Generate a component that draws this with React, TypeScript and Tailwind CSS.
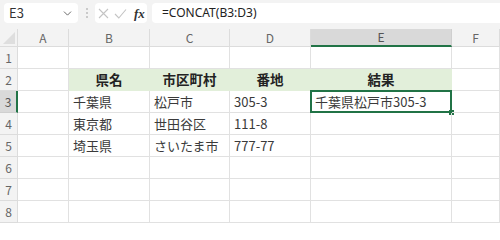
import { ChevronDown } from "lucide-react";

const cols = [
  { key: "A", w: "w-[51px]" },
  { key: "B", w: "w-[81px]" },
  { key: "C", w: "w-[80px]" },
  { key: "D", w: "w-[81px]" },
  { key: "E", w: "w-[141px]" },
  { key: "F", w: "w-[48px]" },
];

const data: Record<number, string[]> = {
  2: ["", "県名", "市区町村", "番地", "結果", ""],
  3: ["", "千葉県", "松戸市", "305-3", "千葉県松戸市305-3", ""],
  4: ["", "東京都", "世田谷区", "111-8", "", ""],
  5: ["", "埼玉県", "さいたま市", "777-77", "", ""],
};

const rows = [1, 2, 3, 4, 5, 6, 7, 8];

function Toolbar() {
  return (
    <div className="h-[29px] bg-[#f3f3f3] flex items-start pt-[3px] pl-[4px]">
      <div className="w-[74px] h-[20px] bg-white rounded-[4px] flex items-center justify-between pl-[5px] pr-[4px]">
        <span className="text-[13px] text-[#333]">E3</span>
        <ChevronDown className="w-[13px] h-[13px] text-[#555]" strokeWidth={1.6} />
      </div>
      <div className="w-[17px] h-[20px] flex flex-col items-center justify-center gap-[2px]">
        <span className="w-[2px] h-[2px] rounded-full bg-[#bdbdbd]" />
        <span className="w-[2px] h-[2px] rounded-full bg-[#bdbdbd]" />
        <span className="w-[2px] h-[2px] rounded-full bg-[#bdbdbd]" />
      </div>
      <div className="w-[52px] h-[20px] bg-white rounded-[4px] flex items-center pl-[3px] gap-[5px]">
        <svg width="11" height="11" viewBox="0 0 11 11">
          <path d="M1 1 L10 10 M10 1 L1 10" stroke="#c4c4c4" strokeWidth="1.1" fill="none" />
        </svg>
        <svg width="13" height="11" viewBox="0 0 13 11">
          <path d="M1 6 L4.8 10 L12 1.5" stroke="#c4c4c4" strokeWidth="1.1" fill="none" />
        </svg>
        <span className="text-[13px] italic font-bold text-[#333] font-['Liberation_Serif',serif] leading-none ml-[2px]">
          fx
        </span>
      </div>
      <div className="ml-[5px] flex-1 h-[20px] bg-white rounded-l-[4px] flex items-center pl-[10px]">
        <span className="text-[12px] text-[#222] font-['Noto_Sans',sans-serif]">=CONCAT(B3:D3)</span>
      </div>
    </div>
  );
}

function HeaderRow() {
  return (
    <div className="flex h-[18px] bg-[#f3f3f3]">
      <div className="w-[18px] h-full relative border-r border-b border-[#dcdcdc]">
        <svg width="12" height="12" viewBox="0 0 12 12" className="absolute right-[2px] bottom-[2px]">
          <polygon points="12,0 12,12 0,12" fill="#dedede" />
        </svg>
      </div>
      {cols.map((c) => {
        const sel = c.key === "E";
        return (
          <div
            key={c.key}
            className={
              sel
                ? `${c.w} h-full flex items-center justify-center bg-[#d9d9d9] border-r border-[#cfcfcf] border-b-2 border-b-[#217346] text-[12px] text-[#555]`
                : `${c.w} h-full flex items-center justify-center border-r border-b border-[#dcdcdc] text-[12px] text-[#666]`
            }
          >
            {c.key}
          </div>
        );
      })}
    </div>
  );
}

function SheetRow({ n }: { n: number }) {
  const vals = data[n] ?? ["", "", "", "", "", ""];
  const selRow = n === 3;
  return (
    <div className="flex h-[22px]">
      <div
        className={
          selRow
            ? "w-[18px] h-full flex items-center justify-center bg-[#d9d9d9] border-b border-[#cfcfcf] border-r-2 border-r-[#217346] text-[12px] text-[#555]"
            : "w-[18px] h-full flex items-center justify-center bg-[#f3f3f3] border-r border-b border-[#dcdcdc] text-[12px] text-[#666]"
        }
      >
        {n}
      </div>
      {cols.map((c, i) => {
        const head = n === 2 && i >= 1 && i <= 4;
        const sel = n === 3 && c.key === "E";
        return (
          <div
            key={c.key}
            className={
              head
                ? `${c.w} h-full flex items-center justify-center bg-[#e2efda] border-r border-b border-[#e2efda] font-bold text-[13.5px] text-[#222]`
                : `${c.w} h-full relative flex items-center pl-[4px] pt-[1px] border-r border-b border-[#e1e1e1] text-[13px] text-[#3a3a3a] whitespace-nowrap`
            }
          >
            {vals[i]}
            {sel && (
              <>
                <div className="absolute left-[-1px] top-[-1px] right-[-1px] bottom-[-1px] border-2 border-[#217346]" />
                <div className="absolute right-[-3px] bottom-[-3px] w-[5px] h-[5px] bg-[#217346]" />
              </>
            )}
          </div>
        );
      })}
    </div>
  );
}

export default function App() {
  return (
    <div className="w-[500px] h-[224px] overflow-hidden bg-white font-['Noto_Sans_CJK_JP',sans-serif]">
      <Toolbar />
      <HeaderRow />
      {rows.map((n) => (
        <SheetRow key={n} n={n} />
      ))}
    </div>
  );
}
